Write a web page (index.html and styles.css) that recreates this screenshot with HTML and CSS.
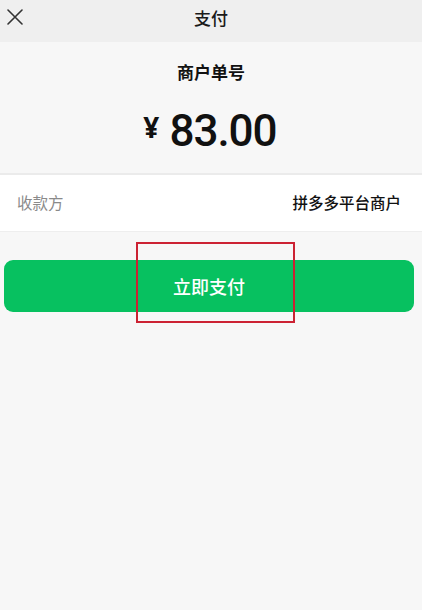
FILE: index.html
```html
<!DOCTYPE html>
<html lang="zh">
<head>
<meta charset="utf-8">
<title>支付</title>
<link rel="stylesheet" href="styles.css">
</head>
<body>
<div class="page">
  <header class="topbar">
    <span class="close">
      <svg width="16" height="16" viewBox="0 0 16 16"><path d="M1 1L15 15M15 1L1 15" stroke="#333" stroke-width="1.6" fill="none" stroke-linecap="round"/></svg>
    </span>
    <span class="title">支付</span>
  </header>
  <section class="summary">
    <div class="order">商户单号</div>
    <div class="amount"><span class="yen">¥</span><span class="num">83.00</span></div>
  </section>
  <section class="row">
    <span class="label">收款方</span>
    <span class="value">拼多多平台商户</span>
  </section>
  <div class="actions">
    <button class="pay">立即支付</button>
    <div class="highlight"></div>
  </div>
</div>
</body>
</html>
```

FILE: styles.css
```css
* { box-sizing: border-box; }
html, body { margin: 0; padding: 0; }
body {
  background: #f7f7f7;
  font-family: "Noto Sans CJK SC", "Noto Sans", sans-serif;
  color: #111;
  width: 422px;
  height: 610px;
  overflow: hidden;
}
.page { display: flex; flex-direction: column; }
.topbar {
  height: 42px;
  background: #efefef;
  position: relative;
  display: flex;
  align-items: center;
  justify-content: center;
}
.close {
  position: absolute;
  left: 7px;
  top: 9px;
  width: 16px;
  height: 16px;
  display: block;
}
.close svg { display: block; }
.title {
  font-size: 17px;
  font-weight: 500;
  color: #1a1a1a;
  margin-top: -8px;
}
.summary {
  background: #f7f7f7;
  height: 133px;
  border-bottom: 2px solid #ebebeb;
  display: flex;
  flex-direction: column;
  align-items: center;
}
.order {
  margin-top: 18px;
  font-size: 17px;
  font-weight: 700;
  line-height: 24px;
  color: #111;
}
.amount {
  margin-top: 22px;
  display: flex;
  align-items: flex-start;
  margin-left: -2px;
}
.yen {
  font-family: "Noto Sans", sans-serif;
  font-size: 28px;
  font-weight: 700;
  line-height: 28px;
  margin-right: 10px;
  margin-top: 7px;
}
.num {
  font-family: Roboto, "Noto Sans", sans-serif;
  font-size: 44px;
  font-weight: 500;
  line-height: 50px;
  letter-spacing: -1px;
  color: #111;
}
.row {
  background: #fff;
  height: 57px;
  border-bottom: 1px solid #eeeeee;
  display: flex;
  align-items: center;
  justify-content: space-between;
  padding: 0 21px 2px 17px;
}
.label { font-size: 15.5px; color: #8a8a8a; }
.value { font-size: 15.5px; color: #111; font-weight: 500; }
.actions {
  position: relative;
  padding: 28px 8px 0 4px;
}
.pay {
  display: block;
  width: 100%;
  height: 52px;
  border: none;
  border-radius: 9px;
  background: #07c160;
  color: #fff;
  font-family: "Noto Sans CJK SC", "Noto Sans", sans-serif;
  font-size: 18px;
  font-weight: 500;
  padding: 0;
}
.highlight {
  position: absolute;
  left: 136px;
  top: 10px;
  width: 159px;
  height: 81px;
  border: 2px solid #cc2233;
}
```
